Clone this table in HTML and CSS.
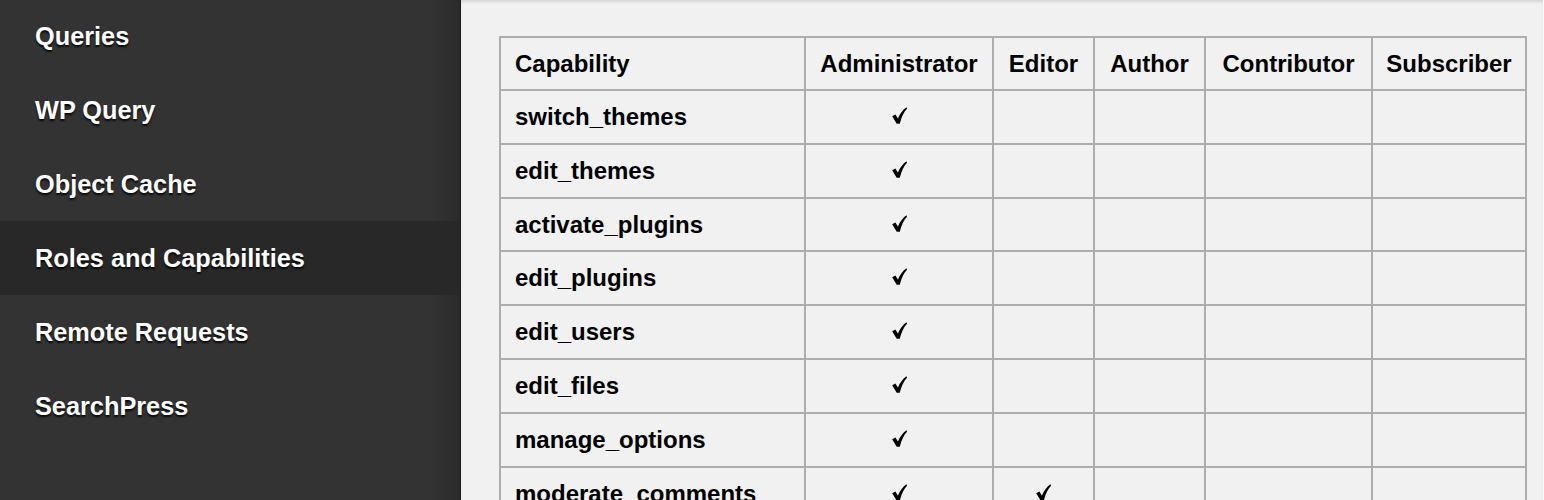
FILE: index.html
```html
<!DOCTYPE html>
<html>
<head>
<meta charset="utf-8">
<link rel="stylesheet" href="styles.css">
</head>
<body>
<div class="app">
  <nav class="sidebar">
    <ul class="menu">
      <li class="item">Queries</li>
      <li class="item">WP Query</li>
      <li class="item">Object Cache</li>
      <li class="item active">Roles and Capabilities</li>
      <li class="item">Remote Requests</li>
      <li class="item">SearchPress</li>
    </ul>
  </nav>
  <main class="main">
    <table class="caps">
      <thead>
        <tr>
          <th class="cap">Capability</th>
          <th class="role r-admin">Administrator</th>
          <th class="role r-editor">Editor</th>
          <th class="role r-author">Author</th>
          <th class="role r-contrib">Contributor</th>
          <th class="role r-sub">Subscriber</th>
        </tr>
      </thead>
      <tbody>
        <tr><td class="cap">switch_themes</td><td class="role"><svg class="check" viewBox="0 0 16 18"><path d="M0.2 9.8 L3.6 7.8 L6.3 12.1 C8.6 7 11.6 3 15.6 0.3 L16 1.9 C12.6 5.5 10.1 10.6 8.3 17.7 L5 17.7 Z"/></svg></td><td class="role"></td><td class="role"></td><td class="role"></td><td class="role"></td></tr>
        <tr><td class="cap">edit_themes</td><td class="role"><svg class="check" viewBox="0 0 16 18"><path d="M0.2 9.8 L3.6 7.8 L6.3 12.1 C8.6 7 11.6 3 15.6 0.3 L16 1.9 C12.6 5.5 10.1 10.6 8.3 17.7 L5 17.7 Z"/></svg></td><td class="role"></td><td class="role"></td><td class="role"></td><td class="role"></td></tr>
        <tr><td class="cap">activate_plugins</td><td class="role"><svg class="check" viewBox="0 0 16 18"><path d="M0.2 9.8 L3.6 7.8 L6.3 12.1 C8.6 7 11.6 3 15.6 0.3 L16 1.9 C12.6 5.5 10.1 10.6 8.3 17.7 L5 17.7 Z"/></svg></td><td class="role"></td><td class="role"></td><td class="role"></td><td class="role"></td></tr>
        <tr><td class="cap">edit_plugins</td><td class="role"><svg class="check" viewBox="0 0 16 18"><path d="M0.2 9.8 L3.6 7.8 L6.3 12.1 C8.6 7 11.6 3 15.6 0.3 L16 1.9 C12.6 5.5 10.1 10.6 8.3 17.7 L5 17.7 Z"/></svg></td><td class="role"></td><td class="role"></td><td class="role"></td><td class="role"></td></tr>
        <tr><td class="cap">edit_users</td><td class="role"><svg class="check" viewBox="0 0 16 18"><path d="M0.2 9.8 L3.6 7.8 L6.3 12.1 C8.6 7 11.6 3 15.6 0.3 L16 1.9 C12.6 5.5 10.1 10.6 8.3 17.7 L5 17.7 Z"/></svg></td><td class="role"></td><td class="role"></td><td class="role"></td><td class="role"></td></tr>
        <tr><td class="cap">edit_files</td><td class="role"><svg class="check" viewBox="0 0 16 18"><path d="M0.2 9.8 L3.6 7.8 L6.3 12.1 C8.6 7 11.6 3 15.6 0.3 L16 1.9 C12.6 5.5 10.1 10.6 8.3 17.7 L5 17.7 Z"/></svg></td><td class="role"></td><td class="role"></td><td class="role"></td><td class="role"></td></tr>
        <tr><td class="cap">manage_options</td><td class="role"><svg class="check" viewBox="0 0 16 18"><path d="M0.2 9.8 L3.6 7.8 L6.3 12.1 C8.6 7 11.6 3 15.6 0.3 L16 1.9 C12.6 5.5 10.1 10.6 8.3 17.7 L5 17.7 Z"/></svg></td><td class="role"></td><td class="role"></td><td class="role"></td><td class="role"></td></tr>
        <tr><td class="cap">moderate_comments</td><td class="role"><svg class="check" viewBox="0 0 16 18"><path d="M0.2 9.8 L3.6 7.8 L6.3 12.1 C8.6 7 11.6 3 15.6 0.3 L16 1.9 C12.6 5.5 10.1 10.6 8.3 17.7 L5 17.7 Z"/></svg></td><td class="role"><svg class="check" viewBox="0 0 16 18"><path d="M0.2 9.8 L3.6 7.8 L6.3 12.1 C8.6 7 11.6 3 15.6 0.3 L16 1.9 C12.6 5.5 10.1 10.6 8.3 17.7 L5 17.7 Z"/></svg></td><td class="role"></td><td class="role"></td><td class="role"></td></tr>
      </tbody>
    </table>
  </main>
</div>
</body>
</html>
```
FILE: styles.css
```css
html, body {
  margin: 0;
  padding: 0;
  height: 100%;
  overflow: hidden;
}

body {
  font-family: "Liberation Sans", Arial, sans-serif;
  background: #f1f1f1;
}

.app {
  display: flex;
  height: 100vh;
}

.sidebar {
  width: 460px;
  flex: 0 0 460px;
  background: linear-gradient(to right, #333333 0, #333333 430px, #2c2c2c 458px, #262626 460px);
  border-right: 1px solid #1e1e1e;
  overflow: hidden;
}

.menu {
  list-style: none;
  margin: -1px 0 0 0;
  padding: 0;
}

.item {
  height: 74px;
  line-height: 74px;
  padding-left: 35px;
  color: #ffffff;
  font-size: 25.3px;
  font-weight: bold;
  text-shadow: 0 2px 2px rgba(0, 0, 0, 0.85);
  white-space: nowrap;
}

.item.active {
  background: #282828;
}

.main {
  flex: 1;
  padding: 36px 16px 0 38px;
  background: #f1f1f1;
  box-shadow: inset 0 3px 3px -1px rgba(0, 0, 0, 0.12);
  border-right: 1px solid #fafafa;
  overflow: hidden;
}

.caps {
  width: 100%;
  border-collapse: collapse;
  border: 2px solid #adadad;
  font-size: 24px;
  font-weight: bold;
  color: #000;
}

.caps th,
.caps td {
  border: 2px solid #adadad;
  padding: 0 14px;
  white-space: nowrap;
}

.caps th {
  line-height: 51px;
  font-weight: bold;
}

.caps td {
  line-height: 51.8px;
}

.caps .cap {
  text-align: left;
}

.caps .role {
  text-align: center;
  padding: 0;
}

.r-admin { width: 186px; }
.r-editor { width: 99px; }
.r-author { width: 109px; }
.r-contrib { width: 165px; }
.r-sub { width: 152px; }

.check {
  display: inline-block;
  width: 15px;
  height: 17px;
  vertical-align: 1px;
  fill: #000;
}
```
